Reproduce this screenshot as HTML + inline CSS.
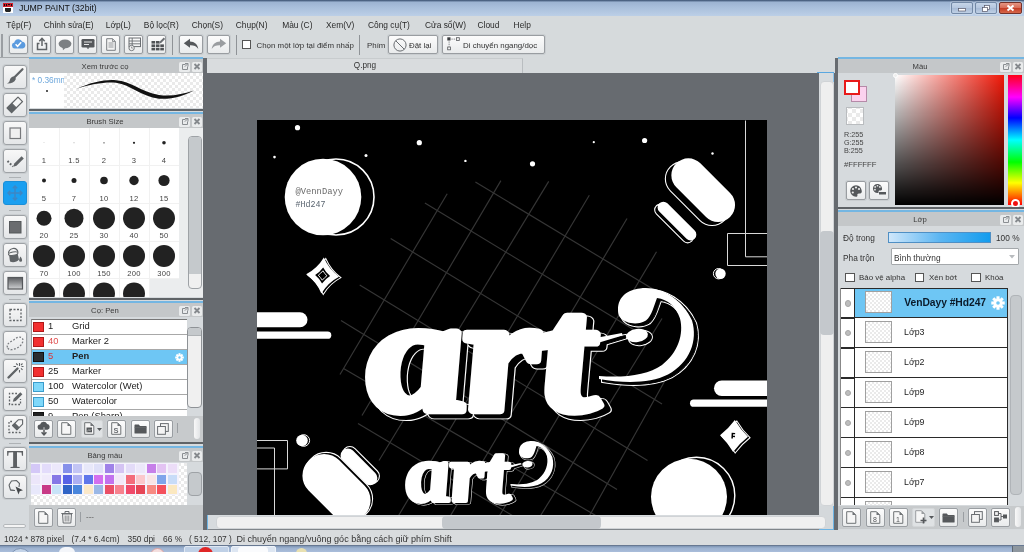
<!DOCTYPE html>
<html><head><meta charset="utf-8"><title>JUMP PAINT</title>
<style>
*{box-sizing:border-box;margin:0;padding:0}
html,body{width:1024px;height:552px;overflow:hidden;background:#d8dbde;font-family:"Liberation Sans","DejaVu Sans",sans-serif;font-size:8.4px;color:#333}
.a{position:absolute}
.t{position:absolute;white-space:pre;line-height:12px}
svg{position:absolute;overflow:visible}
#title{left:0;top:0;width:1024px;height:16px;background:linear-gradient(#3f5573 0,#5b7292 1px,#9cb3d1 2px,#a9bfdb 45%,#bccfe7)}
#menu{left:0;top:16px;width:1024px;height:17px;background:#d6dadc}
#menu span{position:absolute;top:3px;line-height:12px;font-size:8.4px;color:#2a2a2a;white-space:nowrap}
#tbar{left:0;top:33px;width:1024px;height:25px;background:#d6dadc}
.btn{position:absolute;background:linear-gradient(#fcfcfc,#e9ebec);border:1px solid #999da1;border-radius:2px;box-shadow:0 0 0 1px #c9cdd0}
.tool{position:absolute;left:3px;width:24px;height:24px;background:linear-gradient(#f8f8f8,#e4e6e8);border:1px solid #9ea2a6;border-radius:3px;box-shadow:0 0 0 1px #c9cdd0}
.hdr{position:absolute;height:16px;background:#c4c7c9;border-top:2px solid #74b6e2;font-size:7.7px;text-align:center;line-height:15.5px;color:#3a3a3a;padding-right:22px}
.pbody{position:absolute;background:#d6dadd}
.chk{background-color:#fff;background-image:linear-gradient(45deg,#eaeaea 25%,transparent 25%,transparent 75%,#eaeaea 75%),linear-gradient(45deg,#eaeaea 25%,transparent 25%,transparent 75%,#eaeaea 75%);background-size:6px 6px;background-position:0 0,3px 3px}
.hic{position:absolute;top:2.5px;width:10.5px;height:10px;background:#e9ebec;border-radius:1.5px}
.sep{position:absolute;width:1px;background:#8f9397}
.cb{position:absolute;width:9px;height:9px;background:#fff;border:1px solid #555}
.sb{position:absolute;border-radius:4px}
#root{position:absolute;left:0;top:0;width:1024px;height:552px;will-change:transform}
</style></head><body><div id="root">

<div id="title" class="a">
<svg style="left:3px;top:3px" width="10" height="10" viewBox="0 0 10 10"><rect width="10" height="10" fill="#fff"/><rect width="10" height="4" fill="#d21f2b"/><path d="M1 1h1v2h-1zM3 1h1v2h-1zM5 1h2v1h-2zM8 1h1v2h-1z" fill="#111"/><path d="M2 5h6v3l-1 1h-4l-1-1z" fill="#222"/></svg>
<div class="t" style="left:19px;top:2px;font-size:8.7px;color:#111">JUMP PAINT (32bit)</div>
<div class="a" style="left:951px;top:2px;width:22px;height:12px;border:1px solid #7389a6;border-radius:2px;background:linear-gradient(#c6d5e8,#b4c6de 50%,#a6bad5 51%,#bfd0e5);box-shadow:0 0 0 1px rgba(255,255,255,.25)"></div>
<div class="a" style="left:975px;top:2px;width:22px;height:12px;border:1px solid #7389a6;border-radius:2px;background:linear-gradient(#c6d5e8,#b4c6de 50%,#a6bad5 51%,#bfd0e5);box-shadow:0 0 0 1px rgba(255,255,255,.25)"></div>
<div class="a" style="left:999px;top:2px;width:23px;height:12px;border:1px solid #74322a;border-radius:2px;background:linear-gradient(#e59583,#d76a55 50%,#c43b24 51%,#d6674a);box-shadow:0 0 0 1px rgba(255,255,255,.25)"></div>
<svg style="left:951px;top:2px" width="71" height="12" viewBox="0 0 71 12"><rect x="7.5" y="6.5" width="7" height="2.5" fill="#fff" stroke="#556" stroke-width=".7"/><rect x="33.5" y="3.5" width="5" height="4" fill="#fff" stroke="#556" stroke-width=".7"/><rect x="31.5" y="5.5" width="5" height="4" fill="#fff" stroke="#556" stroke-width=".7"/><path d="M56.5 3.5l6 5M62.5 3.5l-6 5" stroke="#fff" stroke-width="2"/></svg>
</div>
<div id="menu" class="a">
<span style="left:6.2px">Tệp(F)</span>
<span style="left:43.8px">Chỉnh sửa(E)</span>
<span style="left:105.8px">Lớp(L)</span>
<span style="left:143.8px">Bộ lọc(R)</span>
<span style="left:191.8px">Chọn(S)</span>
<span style="left:235.8px">Chụp(N)</span>
<span style="left:282.2px">Màu (C)</span>
<span style="left:326px">Xem(V)</span>
<span style="left:368px">Công cụ(T)</span>
<span style="left:425px">Cửa sổ(W)</span>
<span style="left:477.5px">Cloud</span>
<span style="left:513.6px">Help</span>
</div>
<div id="tbar" class="a">
<div class="sep" style="left:1px;top:1px;height:23px;width:2px;background:#9a9ea2"></div>
<div class="a" style="left:0;top:24px;width:29px;height:1px;background:#a4a8ab"></div>
<div class="btn" id="tb0" style="left:8.8px;top:2px;width:19px;height:19px"></div>
<div class="btn" id="tb1" style="left:31.9px;top:2px;width:19px;height:19px"></div>
<div class="btn" id="tb2" style="left:55px;top:2px;width:19px;height:19px"></div>
<div class="btn" id="tb3" style="left:78.1px;top:2px;width:19px;height:19px"></div>
<div class="btn" id="tb4" style="left:101.2px;top:2px;width:19px;height:19px"></div>
<div class="btn" id="tb5" style="left:124.3px;top:2px;width:19px;height:19px"></div>
<div class="btn" id="tb6" style="left:147.4px;top:2px;width:19px;height:19px"></div>
<div class="sep" style="left:171.5px;top:2px;height:20px"></div>
<div class="btn" id="undo" style="left:179px;top:2px;width:23.5px;height:19px"></div>
<div class="btn" id="redo" style="left:206.5px;top:2px;width:23.5px;height:19px"></div>
<div class="sep" style="left:235.5px;top:2px;height:20px"></div>
<div class="cb" style="left:242px;top:7px"></div>
<div class="t" style="left:256.5px;top:7px;font-size:7.9px">Chọn một lớp tại điểm nhấp</div>
<div class="sep" style="left:358.5px;top:2px;height:20px"></div>
<div class="t" style="left:367px;top:7px;font-size:7.9px">Phím</div>
<div class="btn" style="left:388px;top:2px;width:50px;height:19px"></div>
<div class="t" style="left:409px;top:7px;font-size:7.9px">Đặt lại</div>
<div class="btn" style="left:442px;top:2px;width:103px;height:19px"></div>
<div class="t" style="left:463px;top:7px;font-size:7.9px">Di chuyển ngang/dọc</div>
</div>
<div class="a" id="cv" style="left:203px;top:58px;width:635px;height:472px;background:#676b70;overflow:hidden">
<div class="a" style="left:4px;top:0;width:628px;height:15px;background:#d6dadc"></div>
<div class="a" style="left:4px;top:0;width:316px;height:15px;background:#d9dcde;border-right:1px solid #b9bdc0;border-top:1px solid #c8ccce"></div>
<div class="t" style="left:147px;top:2px;font-size:8.2px;width:30px;text-align:center">Q.png</div>
<svg style="left:54px;top:61.500px;overflow:hidden" width="510" height="395.500" viewBox="257 119.500 510 395.500">
<rect x="257" y="119" width="510" height="397" fill="#000"/>
<g stroke="#363636" stroke-width="1.15" fill="none">
<path d="M475.4 181.6L652 288"/>
<path d="M424.9 202.5L640 333"/>
<path d="M390.7 238.1L662 403.5"/>
<path d="M359.7 284.5L647.5 460"/>
<path d="M341 320L617 489"/>
<path d="M343.5 368L598.3 516.5"/>
<path d="M358 423L514 516"/>
<path d="M447.2 193.2L340 374"/>
<path d="M500.9 180.1L362 415"/>
<path d="M548.7 180.9L379 460"/>
<path d="M589.3 194.8L398 516"/>
<path d="M627 218L450 516"/>
<path d="M656.5 251.3L499 516"/>
<path d="M662 318L540 516"/>
<path d="M664.9 380.3L589 516"/>
</g>
<circle cx="297.5" cy="127.2" r="2.6" fill="#fff"/>
<circle cx="419.3" cy="142.2" r="2.6" fill="#fff"/>
<circle cx="274.5" cy="156.6" r="1.3" fill="#fff"/>
<circle cx="366" cy="155" r="1.5" fill="#fff"/>
<circle cx="465.4" cy="160.4" r="1.2" fill="#fff"/>
<circle cx="532.5" cy="163.3" r="2.6" fill="#fff"/>
<circle cx="593.8" cy="141.7" r="1.1" fill="#fff"/>
<circle cx="644.6" cy="140" r="2.6" fill="#fff"/>
<circle cx="712.5" cy="153" r="1.2" fill="#fff"/>
<circle cx="336" cy="196.500" r="38" fill="#000" stroke="#fff" stroke-width="1.600"/>
<circle cx="323" cy="196.500" r="38.300" fill="#fff"/>
<text x="295.500" y="193" font-family="Liberation Mono,monospace" font-size="8.600" fill="#6a6a6a" textLength="47.500" lengthAdjust="spacingAndGlyphs">@VennDayy</text>
<text x="295.500" y="206.500" font-family="Liberation Mono,monospace" font-size="8.600" fill="#5a6570" textLength="30" lengthAdjust="spacingAndGlyphs">#Hd247</text>
<g transform="translate(324.500 276) rotate(4)"><path d="M0 -18Q5.94 -6.48 16.5 0Q5.94 6.48 0 18Q-5.94 6.48 -16.5 0Q-5.94 -6.48 0 -18Z" fill="#000" stroke="#fff" stroke-width="1"/></g>
<g transform="translate(322.600 275) rotate(4)"><path d="M0 -18Q5.94 -6.48 16.5 0Q5.94 6.48 0 18Q-5.94 6.48 -16.5 0Q-5.94 -6.48 0 -18Z" fill="#fff"/><path d="M0 -8Q3.00 -3.20 7.5 0Q3.00 3.20 0 8Q-3.00 3.20 -7.5 0Q-3.00 -3.20 0 -8Z" fill="#000"/><path d="M0 -4.7Q1.94 -2.12 4.3 0Q1.94 2.12 0 4.7Q-1.94 2.12 -4.3 0Q-1.94 -2.12 0 -4.7Z" fill="none" stroke="#fff" stroke-width=".9"/></g>
<rect x="240" y="311.700" width="67.500" height="15" rx="7.500" fill="#fff"/>
<rect x="240" y="331" width="91.300" height="7.300" rx="3.650" fill="#fff"/>
<rect x="714" y="380" width="80" height="15.500" rx="7.700" fill="#fff"/>
<rect x="690" y="399" width="100" height="7.300" rx="3.650" fill="#fff"/>
<path d="M745.500 120V256.300H767M767 233H727.500V265H767" fill="none" stroke="#d8d8d8" stroke-width="1"/>
<path d="M257 440H287.500V468.400H257M257 447.500H274.500V516" fill="none" stroke="#d8d8d8" stroke-width="1"/>
<rect x="659.2" y="176.2" width="76" height="34" rx="17" transform="rotate(45 697.2 193.2)" fill="#000" stroke="#fff" stroke-width="1.1"/>
<rect x="665.2" y="172.7" width="76" height="34" rx="17" transform="rotate(45 703.2 189.7)" fill="#fff"/>
<rect x="649.0" y="217.2" width="50" height="11.5" rx="5.7" transform="rotate(45 674 223)" fill="#000" stroke="#fff" stroke-width="1.1"/>
<rect x="652.0" y="214.8" width="50" height="11.5" rx="5.7" transform="rotate(45 677 220.5)" fill="#fff"/>
<circle cx="718.600" cy="273.200" r="5.200" fill="#000" stroke="#fff" stroke-width="1"/><circle cx="720.500" cy="273.200" r="5.200" fill="#fff"/>
<circle cx="303.800" cy="440" r="5.800" fill="#000" stroke="#fff" stroke-width="1"/><circle cx="302" cy="440" r="5.800" fill="#fff"/>
<rect x="338.0" y="457.2" width="46" height="14.5" rx="7.2" transform="rotate(45 361 464.5)" fill="#000" stroke="#fff" stroke-width="1.1"/>
<rect x="336.0" y="459.1" width="46" height="14.5" rx="7.2" transform="rotate(45 359 466.3)" fill="#fff"/>
<rect x="299.5" y="464.5" width="78" height="43" rx="21" transform="rotate(45 338.5 486)" fill="#000" stroke="#fff" stroke-width="1.1"/>
<rect x="297.5" y="466.0" width="78" height="43" rx="21" transform="rotate(45 336.5 487.5)" fill="#fff"/>
<g transform="translate(736 436.500) rotate(3)"><path d="M0 -16Q6.02 -6.88 14 0Q6.02 6.88 0 16Q-6.02 6.88 -14 0Q-6.02 -6.88 0 -16Z" fill="#000" stroke="#fff" stroke-width="1"/></g>
<g transform="translate(734 435.500) rotate(3)"><path d="M0 -16Q6.02 -6.88 14 0Q6.02 6.88 0 16Q-6.02 6.88 -14 0Q-6.02 -6.88 0 -16Z" fill="#fff"/><path d="M-2.500 -3h3.500v1.300h-2v1.500h2v1.300h-2v1.500h-1.500z" fill="#000"/></g>
<circle cx="696.500" cy="495" r="38.300" fill="#000" stroke="#fff" stroke-width="1.400"/>
<circle cx="689" cy="496.300" r="38" fill="#fff"/>
<g transform="translate(0 0)"><g transform="translate(6 3.500)"><g transform="translate(371.500 409.500) scale(1.12 .93) skewX(6)"><text x="0 87 155" y="0" font-family="Liberation Serif,serif" font-style="italic" font-weight="bold" font-size="178" stroke-linejoin="round" fill="#000" stroke="#fff" stroke-width="11.500">art</text></g></g><g transform="translate(3.500 2.500)" fill="#000" stroke="#fff" stroke-width="3"><path d="M618 309C618 296 628 289 640 288C660 285 682 298 692 320C698 340 690 362 668 374C650 383 625 383 599 378.500L599 375.500C625 377.500 648 374.500 662 364.500C678 352 684 334 680 318C676 306 668 299 657 297.500C654 305 652 315 646 320C638 325 626 323 621 318C618 315 618 312 618 309Z"/><path d="M528 346L590 338.500L622 332.500L622.500 335L591 344.500L528 352Z"/><ellipse cx="637" cy="335" rx="11" ry="6.500" transform="rotate(-8 637 335)"/></g><g transform="translate(6 3.500)"><g transform="translate(371.500 409.500) scale(1.12 .93) skewX(6)"><text x="0 87 155" y="0" font-family="Liberation Serif,serif" font-style="italic" font-weight="bold" font-size="178" stroke-linejoin="round" fill="#000" stroke="#000" stroke-width="9.500">art</text></g></g><g transform="translate(3.500 2.500)" fill="#000" stroke="#000" stroke-width="1"><path d="M618 309C618 296 628 289 640 288C660 285 682 298 692 320C698 340 690 362 668 374C650 383 625 383 599 378.500L599 375.500C625 377.500 648 374.500 662 364.500C678 352 684 334 680 318C676 306 668 299 657 297.500C654 305 652 315 646 320C638 325 626 323 621 318C618 315 618 312 618 309Z"/><path d="M528 346L590 338.500L622 332.500L622.500 335L591 344.500L528 352Z"/><ellipse cx="637" cy="335" rx="11" ry="6.500" transform="rotate(-8 637 335)"/></g><g transform="translate(371.500 409.500) scale(1.12 .93) skewX(6)"><text x="0 87 155" y="0" font-family="Liberation Serif,serif" font-style="italic" font-weight="bold" font-size="178" stroke-linejoin="round" fill="#fff" stroke="#fff" stroke-width="9">art</text></g><g fill="#fff"><path d="M618 309C618 296 628 289 640 288C660 285 682 298 692 320C698 340 690 362 668 374C650 383 625 383 599 378.500L599 375.500C625 377.500 648 374.500 662 364.500C678 352 684 334 680 318C676 306 668 299 657 297.500C654 305 652 315 646 320C638 325 626 323 621 318C618 315 618 312 618 309Z"/><path d="M528 346L590 338.500L622 332.500L622.500 335L591 344.500L528 352Z"/><ellipse cx="637" cy="335" rx="11" ry="6.500" transform="rotate(-8 637 335)"/></g></g>
<g transform="translate(240.900 299.600) scale(0.45 0.49)"><g transform="translate(6 3.500)"><g transform="translate(371.500 409.500) scale(1.12 .93) skewX(6)"><text x="0 87 155" y="0" font-family="Liberation Serif,serif" font-style="italic" font-weight="bold" font-size="178" stroke-linejoin="round" fill="#000" stroke="#fff" stroke-width="11.500">art</text></g></g><g transform="translate(3.500 2.500)" fill="#000" stroke="#fff" stroke-width="3"><path d="M618 309C618 296 628 289 640 288C660 285 682 298 692 320C698 340 690 362 668 374C650 383 625 383 599 378.500L599 375.500C625 377.500 648 374.500 662 364.500C678 352 684 334 680 318C676 306 668 299 657 297.500C654 305 652 315 646 320C638 325 626 323 621 318C618 315 618 312 618 309Z"/><path d="M528 346L590 338.500L622 332.500L622.500 335L591 344.500L528 352Z"/><ellipse cx="637" cy="335" rx="11" ry="6.500" transform="rotate(-8 637 335)"/></g><g transform="translate(6 3.500)"><g transform="translate(371.500 409.500) scale(1.12 .93) skewX(6)"><text x="0 87 155" y="0" font-family="Liberation Serif,serif" font-style="italic" font-weight="bold" font-size="178" stroke-linejoin="round" fill="#000" stroke="#000" stroke-width="9.500">art</text></g></g><g transform="translate(3.500 2.500)" fill="#000" stroke="#000" stroke-width="1"><path d="M618 309C618 296 628 289 640 288C660 285 682 298 692 320C698 340 690 362 668 374C650 383 625 383 599 378.500L599 375.500C625 377.500 648 374.500 662 364.500C678 352 684 334 680 318C676 306 668 299 657 297.500C654 305 652 315 646 320C638 325 626 323 621 318C618 315 618 312 618 309Z"/><path d="M528 346L590 338.500L622 332.500L622.500 335L591 344.500L528 352Z"/><ellipse cx="637" cy="335" rx="11" ry="6.500" transform="rotate(-8 637 335)"/></g><g transform="translate(371.500 409.500) scale(1.12 .93) skewX(6)"><text x="0 87 155" y="0" font-family="Liberation Serif,serif" font-style="italic" font-weight="bold" font-size="178" stroke-linejoin="round" fill="#fff" stroke="#fff" stroke-width="9">art</text></g><g fill="#fff"><path d="M618 309C618 296 628 289 640 288C660 285 682 298 692 320C698 340 690 362 668 374C650 383 625 383 599 378.500L599 375.500C625 377.500 648 374.500 662 364.500C678 352 684 334 680 318C676 306 668 299 657 297.500C654 305 652 315 646 320C638 325 626 323 621 318C618 315 618 312 618 309Z"/><path d="M528 346L590 338.500L622 332.500L622.500 335L591 344.500L528 352Z"/><ellipse cx="637" cy="335" rx="11" ry="6.500" transform="rotate(-8 637 335)"/></g></g>
</svg>
<div class="a" style="left:616px;top:15px;width:15px;height:457px;background:#d7dbde"></div>
<div class="a" style="left:614px;top:14px;width:17px;height:1px;background:#5aa7e0"></div>
<div class="a" style="left:630px;top:15px;width:1px;height:9px;background:#8fc4ea"></div>
<div class="sb" style="left:617px;top:23px;width:13.500px;height:425px;background:#efefef;border:1px solid #d0d3d6"></div>
<div class="sb" style="left:617px;top:173px;width:13.500px;height:104px;background:#c4c8cc"></div>
<div class="a" style="left:4px;top:457px;width:612px;height:15px;background:#d7dbde;border-bottom:1px solid #80858a;border-left:1px solid #6db4e4"></div>
<div class="a" style="left:616px;top:448px;width:15px;height:24px;background:#d4d8db;border-bottom:1px solid #6db4e4;border-right:1px solid #6db4e4"></div>
<div class="sb" style="left:12.500px;top:458px;width:610px;height:13px;background:#f0f0f0;border:1px solid #d0d3d6"></div>
<div class="sb" style="left:239px;top:458px;width:159px;height:13px;background:#c4c8cc"></div>
</div>
<div class="a" id="status" style="left:0;top:530px;width:1024px;height:16px;background:#d9dcde;color:#333"><div class="t" style="left:4px;top:3px;font-size:8.400px">1024 * 878 pixel</div><div class="t" style="left:71.500px;top:3px;font-size:8.400px">(7.4 * 6.4cm)</div><div class="t" style="left:127.500px;top:3px;font-size:8.400px">350 dpi</div><div class="t" style="left:163px;top:3px;font-size:8.400px">66 %</div><div class="t" style="left:189px;top:3px;font-size:8.400px">( 512, 107 )</div><div class="t" style="left:236.500px;top:3px;font-size:9.050px">Di chuyển ngang/vuông góc bằng cách giữ phím Shift</div></div>
<div class="a" id="task" style="left:0;top:545px;width:1024px;height:7px;background:linear-gradient(#56647a,#8097b6 18%,#9db2d0 45%,#a9bdda);overflow:hidden"><div class="a" style="left:9px;top:2.500px;width:23px;height:23px;border-radius:50%;background:#c3d3e8;border:1px solid #7d93b3"></div><div class="a" style="left:59px;top:2px;width:16px;height:14px;border-radius:6px;background:#f4f6fa"></div><div class="a" style="left:150px;top:2.500px;width:15px;height:15px;border-radius:50%;background:#f3dede;border:1px solid #d8a0a0"></div><div class="a" style="left:184px;top:1px;width:45px;height:10px;border-radius:2px;background:#bfd0e6;border:1px solid #dfe8f3"></div><div class="a" style="left:198px;top:2px;width:15px;height:15px;border-radius:50%;background:#e02626"></div><div class="a" style="left:231px;top:1px;width:45px;height:10px;border-radius:2px;background:#dde6f2;border:1px solid #eef3f9"></div><div class="a" style="left:238px;top:2px;width:30px;height:10px;border-radius:3px;background:#fafbfd"></div><div class="a" style="left:296px;top:3px;width:11px;height:11px;border-radius:50%;background:#e8e0b0"></div><div class="a" style="left:1012px;top:1px;width:12px;height:8px;background:#8e979f;border-left:1px solid #5d6772"></div></div>
<div class="a" id="left" style="left:0;top:58px;width:203px;height:472px;background:#d6dadd">
<div class="tool" id="tool0" style="top:7px"></div>
<div class="tool" id="tool1" style="top:35px"></div>
<div class="tool" id="tool2" style="top:63px"></div>
<div class="tool" id="tool3" style="top:91px"></div>
<div class="tool" id="tool4" style="top:123px;background:#1a9ff0;border-color:#1a8fd8;box-shadow:none"></div>
<div class="tool" id="tool5" style="top:157px"></div>
<div class="tool" id="tool6" style="top:185px"></div>
<div class="tool" id="tool7" style="top:213px"></div>
<div class="tool" id="tool8" style="top:245px"></div>
<div class="tool" id="tool9" style="top:273px"></div>
<div class="tool" id="tool10" style="top:301px"></div>
<div class="tool" id="tool11" style="top:329px"></div>
<div class="tool" id="tool12" style="top:357px"></div>
<div class="tool" id="tool13" style="top:389px"></div>
<div class="tool" id="tool14" style="top:417px"></div>
<div class="a" style="left:9px;top:119px;width:12px;height:1px;background:#aeb2b5"></div>
<div class="a" style="left:9px;top:152px;width:12px;height:1px;background:#aeb2b5"></div>
<div class="a" style="left:9px;top:240.5px;width:12px;height:1px;background:#aeb2b5"></div>
<div class="a" style="left:9px;top:384.5px;width:12px;height:1px;background:#aeb2b5"></div>
<div class="a" style="left:9px;top:469px;width:12px;height:1px;background:#aeb2b5"></div>
<div class="hdr" style="left:29px;top:-1px;width:174px">Xem trước cọ<div class="hic" style="left:150px"></div><div class="hic" style="left:162.5px"></div><svg style="left:151px;top:3px" width="22" height="9" viewBox="0 0 22 9"><path d="M5.5 2.5h-3v5h5v-3" fill="none" stroke="#8a8e92" stroke-width="1"/><path d="M5 1.5h3v3M7.8 1.7l-3 3" fill="none" stroke="#8a8e92" stroke-width="1"/><path d="M14.500 2l5 5M19.500 2l-5 5" stroke="#85898d" stroke-width="1.8"/></svg></div>
<div class="a" style="left:30px;top:15px;width:34px;height:35px;background:#fff;overflow:hidden"><div class="t" style="left:2px;top:1px;font-size:8.3px;color:#6fa8dc">* 0.36mm</div><div class="a" style="left:15.5px;top:17px;width:2px;height:2px;border-radius:1px;background:#222"></div></div>
<div class="a chk" style="left:64px;top:15px;width:139px;height:35px"></div>
<svg style="left:64px;top:15px" width="139" height="35" viewBox="0 0 139 35"><path d="M12.500 15.800C28 9 41 6.300 52 7.200C67 8.500 77 18.500 95 22C107 23.800 119 21 130 17.500C120 22.800 108 26.600 95 25.700C77 23.500 67 12 52 9.800C41 8.800 28 11 12.500 15.800Z" fill="#111"/></svg>
<div class="a" style="left:29px;top:50.5px;width:174px;height:2px;background:#5f6367"></div>
<div class="hdr" style="left:29px;top:54px;width:174px">Brush Size<div class="hic" style="left:150px"></div><div class="hic" style="left:162.5px"></div><svg style="left:151px;top:3px" width="22" height="9" viewBox="0 0 22 9"><path d="M5.5 2.5h-3v5h5v-3" fill="none" stroke="#8a8e92" stroke-width="1"/><path d="M5 1.5h3v3M7.8 1.7l-3 3" fill="none" stroke="#8a8e92" stroke-width="1"/><path d="M14.500 2l5 5M19.500 2l-5 5" stroke="#85898d" stroke-width="1.8"/></svg></div>
<div class="a" style="left:29px;top:70px;width:174px;height:169px;background:#ebedee;overflow:hidden">
<div class="a" style="left:0;top:0;width:150px;height:169px;background:#fff"></div>
<svg style="left:0;top:0" width="150" height="169"><circle cx="15" cy="14.8" r="0.25" fill="#222"/></svg>
<div class="t" style="left:0px;top:27.0px;width:30px;text-align:center;font-size:7.6px;color:#444;letter-spacing:.3px">1</div>
<svg style="left:0;top:0" width="150" height="169"><circle cx="45" cy="14.8" r="0.4" fill="#222"/></svg>
<div class="t" style="left:30px;top:27.0px;width:30px;text-align:center;font-size:7.6px;color:#444;letter-spacing:.3px">1.5</div>
<svg style="left:0;top:0" width="150" height="169"><circle cx="75" cy="14.8" r="0.65" fill="#222"/></svg>
<div class="t" style="left:60px;top:27.0px;width:30px;text-align:center;font-size:7.6px;color:#444;letter-spacing:.3px">2</div>
<svg style="left:0;top:0" width="150" height="169"><circle cx="105" cy="14.8" r="1.1" fill="#222"/></svg>
<div class="t" style="left:90px;top:27.0px;width:30px;text-align:center;font-size:7.6px;color:#444;letter-spacing:.3px">3</div>
<svg style="left:0;top:0" width="150" height="169"><circle cx="135" cy="14.8" r="1.8" fill="#222"/></svg>
<div class="t" style="left:120px;top:27.0px;width:30px;text-align:center;font-size:7.6px;color:#444;letter-spacing:.3px">4</div>
<svg style="left:0;top:0" width="150" height="169"><circle cx="15" cy="52.5" r="2.0" fill="#222"/></svg>
<div class="t" style="left:0px;top:64.7px;width:30px;text-align:center;font-size:7.6px;color:#444;letter-spacing:.3px">5</div>
<svg style="left:0;top:0" width="150" height="169"><circle cx="45" cy="52.5" r="2.5" fill="#222"/></svg>
<div class="t" style="left:30px;top:64.7px;width:30px;text-align:center;font-size:7.6px;color:#444;letter-spacing:.3px">7</div>
<svg style="left:0;top:0" width="150" height="169"><circle cx="75" cy="52.5" r="3.8" fill="#222"/></svg>
<div class="t" style="left:60px;top:64.7px;width:30px;text-align:center;font-size:7.6px;color:#444;letter-spacing:.3px">10</div>
<svg style="left:0;top:0" width="150" height="169"><circle cx="105" cy="52.5" r="4.7" fill="#222"/></svg>
<div class="t" style="left:90px;top:64.7px;width:30px;text-align:center;font-size:7.6px;color:#444;letter-spacing:.3px">12</div>
<svg style="left:0;top:0" width="150" height="169"><circle cx="135" cy="52.5" r="5.6" fill="#222"/></svg>
<div class="t" style="left:120px;top:64.7px;width:30px;text-align:center;font-size:7.6px;color:#444;letter-spacing:.3px">15</div>
<svg style="left:0;top:0" width="150" height="169"><circle cx="15" cy="90.2" r="7.5" fill="#222"/></svg>
<div class="t" style="left:0px;top:102.4px;width:30px;text-align:center;font-size:7.6px;color:#444;letter-spacing:.3px">20</div>
<svg style="left:0;top:0" width="150" height="169"><circle cx="45" cy="90.2" r="9.5" fill="#222"/></svg>
<div class="t" style="left:30px;top:102.4px;width:30px;text-align:center;font-size:7.6px;color:#444;letter-spacing:.3px">25</div>
<svg style="left:0;top:0" width="150" height="169"><circle cx="75" cy="90.2" r="11.0" fill="#222"/></svg>
<div class="t" style="left:60px;top:102.4px;width:30px;text-align:center;font-size:7.6px;color:#444;letter-spacing:.3px">30</div>
<svg style="left:0;top:0" width="150" height="169"><circle cx="105" cy="90.2" r="11.0" fill="#222"/></svg>
<div class="t" style="left:90px;top:102.4px;width:30px;text-align:center;font-size:7.6px;color:#444;letter-spacing:.3px">40</div>
<svg style="left:0;top:0" width="150" height="169"><circle cx="135" cy="90.2" r="11.0" fill="#222"/></svg>
<div class="t" style="left:120px;top:102.4px;width:30px;text-align:center;font-size:7.6px;color:#444;letter-spacing:.3px">50</div>
<svg style="left:0;top:0" width="150" height="169"><circle cx="15" cy="127.9" r="11.0" fill="#222"/></svg>
<div class="t" style="left:0px;top:140.1px;width:30px;text-align:center;font-size:7.6px;color:#444;letter-spacing:.3px">70</div>
<svg style="left:0;top:0" width="150" height="169"><circle cx="45" cy="127.9" r="11.0" fill="#222"/></svg>
<div class="t" style="left:30px;top:140.1px;width:30px;text-align:center;font-size:7.6px;color:#444;letter-spacing:.3px">100</div>
<svg style="left:0;top:0" width="150" height="169"><circle cx="75" cy="127.9" r="11.0" fill="#222"/></svg>
<div class="t" style="left:60px;top:140.1px;width:30px;text-align:center;font-size:7.6px;color:#444;letter-spacing:.3px">150</div>
<svg style="left:0;top:0" width="150" height="169"><circle cx="105" cy="127.9" r="11.0" fill="#222"/></svg>
<div class="t" style="left:90px;top:140.1px;width:30px;text-align:center;font-size:7.6px;color:#444;letter-spacing:.3px">200</div>
<svg style="left:0;top:0" width="150" height="169"><circle cx="135" cy="127.9" r="11.0" fill="#222"/></svg>
<div class="t" style="left:120px;top:140.1px;width:30px;text-align:center;font-size:7.6px;color:#444;letter-spacing:.3px">300</div>
<svg style="left:0;top:0" width="150" height="169"><circle cx="15" cy="165.6" r="11.0" fill="#222"/></svg>
<div class="t" style="left:0px;top:177.8px;width:30px;text-align:center;font-size:7.6px;color:#444;letter-spacing:.3px"></div>
<svg style="left:0;top:0" width="150" height="169"><circle cx="45" cy="165.6" r="11.0" fill="#222"/></svg>
<div class="t" style="left:30px;top:177.8px;width:30px;text-align:center;font-size:7.6px;color:#444;letter-spacing:.3px"></div>
<svg style="left:0;top:0" width="150" height="169"><circle cx="75" cy="165.6" r="11.0" fill="#222"/></svg>
<div class="t" style="left:60px;top:177.8px;width:30px;text-align:center;font-size:7.6px;color:#444;letter-spacing:.3px"></div>
<svg style="left:0;top:0" width="150" height="169"><circle cx="105" cy="165.6" r="11.0" fill="#222"/></svg>
<div class="t" style="left:90px;top:177.8px;width:30px;text-align:center;font-size:7.6px;color:#444;letter-spacing:.3px"></div>
<div class="a" style="left:120px;top:150.3px;width:30px;height:38px;background:#ebedee"></div>
<div class="a" style="left:30px;top:0;width:1px;height:169px;background:#f1f1f1"></div>
<div class="a" style="left:60px;top:0;width:1px;height:169px;background:#f1f1f1"></div>
<div class="a" style="left:90px;top:0;width:1px;height:169px;background:#f1f1f1"></div>
<div class="a" style="left:120px;top:0;width:1px;height:169px;background:#f1f1f1"></div>
<div class="a" style="left:0;top:37.2px;width:150px;height:1px;background:#f1f1f1"></div>
<div class="a" style="left:0;top:74.9px;width:150px;height:1px;background:#f1f1f1"></div>
<div class="a" style="left:0;top:112.6px;width:150px;height:1px;background:#f1f1f1"></div>
<div class="a" style="left:0;top:150.3px;width:150px;height:1px;background:#f1f1f1"></div>
<div class="sb" style="left:159px;top:8px;width:13.5px;height:153px;background:#f0f0f0;border:1px solid #9ea2a6;overflow:hidden"><div class="a" style="left:0;top:0;width:12px;height:137px;background:#c5c9cc"></div></div>
</div>
<div class="a" style="left:29px;top:239.5px;width:174px;height:2px;background:#5f6367"></div>
<div class="hdr" style="left:29px;top:243px;width:174px">Cọ: Pen<div class="hic" style="left:150px"></div><div class="hic" style="left:162.5px"></div><svg style="left:151px;top:3px" width="22" height="9" viewBox="0 0 22 9"><path d="M5.5 2.5h-3v5h5v-3" fill="none" stroke="#8a8e92" stroke-width="1"/><path d="M5 1.5h3v3M7.8 1.7l-3 3" fill="none" stroke="#8a8e92" stroke-width="1"/><path d="M14.500 2l5 5M19.500 2l-5 5" stroke="#85898d" stroke-width="1.8"/></svg></div>
<div class="a" style="left:31px;top:261px;width:156px;height:97px;background:#fff;border-top:1px solid #777;border-left:1px solid #999;overflow:hidden">
<div class="a" style="left:0;top:0px;width:156px;height:15px;background:#fff;border-bottom:1px solid #a8a8a8"><div class="a" style="left:1.3px;top:1.5px;width:11px;height:10.5px;background:#f23030;border:1px solid #b01818"></div><div class="t" style="left:16px;top:.3px;font-size:9.4px;color:#222">1</div><div class="t" style="left:40px;top:.3px;font-size:9.4px;color:#222;font-weight:normal">Grid</div></div>
<div class="a" style="left:0;top:15px;width:156px;height:15px;background:#fff;border-bottom:1px solid #a8a8a8"><div class="a" style="left:1.3px;top:1.5px;width:11px;height:10.5px;background:#f23030;border:1px solid #b01818"></div><div class="t" style="left:16px;top:.3px;font-size:9.4px;color:#e05050">40</div><div class="t" style="left:40px;top:.3px;font-size:9.4px;color:#222;font-weight:normal">Marker 2</div></div>
<div class="a" style="left:0;top:30px;width:156px;height:15px;background:#6ec6f4;border-bottom:1px solid #a8a8a8"><div class="a" style="left:1.3px;top:1.5px;width:11px;height:10.5px;background:#2a2d30;border:1px solid #111"></div><div class="t" style="left:16px;top:.3px;font-size:9.4px;color:#e03030">5</div><div class="t" style="left:40px;top:.3px;font-size:9.4px;color:#222;font-weight:bold">Pen</div></div>
<div class="a" style="left:0;top:45px;width:156px;height:15px;background:#fff;border-bottom:1px solid #a8a8a8"><div class="a" style="left:1.3px;top:1.5px;width:11px;height:10.5px;background:#f23030;border:1px solid #b01818"></div><div class="t" style="left:16px;top:.3px;font-size:9.4px;color:#222">25</div><div class="t" style="left:40px;top:.3px;font-size:9.4px;color:#222;font-weight:normal">Marker</div></div>
<div class="a" style="left:0;top:60px;width:156px;height:15px;background:#fff;border-bottom:1px solid #a8a8a8"><div class="a" style="left:1.3px;top:1.5px;width:11px;height:10.5px;background:#7fd8fa;border:1px solid #3a9ccc"></div><div class="t" style="left:16px;top:.3px;font-size:9.4px;color:#222">100</div><div class="t" style="left:40px;top:.3px;font-size:9.4px;color:#222;font-weight:normal">Watercolor (Wet)</div></div>
<div class="a" style="left:0;top:75px;width:156px;height:15px;background:#fff;border-bottom:1px solid #a8a8a8"><div class="a" style="left:1.3px;top:1.5px;width:11px;height:10.5px;background:#7fd8fa;border:1px solid #3a9ccc"></div><div class="t" style="left:16px;top:.3px;font-size:9.4px;color:#222">50</div><div class="t" style="left:40px;top:.3px;font-size:9.4px;color:#222;font-weight:normal">Watercolor</div></div>
<div class="a" style="left:0;top:90px;width:156px;height:15px;background:#fff;border-bottom:1px solid #a8a8a8"><div class="a" style="left:1.3px;top:1.5px;width:11px;height:10.5px;background:#222;border:1px solid #111"></div><div class="t" style="left:16px;top:.3px;font-size:9.4px;color:#222">9</div><div class="t" style="left:40px;top:.3px;font-size:9.4px;color:#222;font-weight:normal">Pen (Sharp)</div></div>
<svg style="left:143px;top:33px" width="9" height="9" viewBox="-5 -5 10 10"><g fill="#fff"><circle r="3.2"/><rect x="-1.1" y="-4.8" width="2.2" height="3" transform="rotate(0)"/><rect x="-1.1" y="-4.8" width="2.2" height="3" transform="rotate(45)"/><rect x="-1.1" y="-4.8" width="2.2" height="3" transform="rotate(90)"/><rect x="-1.1" y="-4.8" width="2.2" height="3" transform="rotate(135)"/><rect x="-1.1" y="-4.8" width="2.2" height="3" transform="rotate(180)"/><rect x="-1.1" y="-4.8" width="2.2" height="3" transform="rotate(225)"/><rect x="-1.1" y="-4.8" width="2.2" height="3" transform="rotate(270)"/><rect x="-1.1" y="-4.8" width="2.2" height="3" transform="rotate(315)"/></g><circle r="1.3" fill="#6ec6f4"/></svg>
</div>
<div class="sb" style="left:187px;top:268.6px;width:15px;height:81px;background:#f0f0f0;border:1px solid #8e9296;overflow:hidden"><div class="a" style="left:0;top:0;width:13px;height:8.5px;background:#c5c9cc;border-bottom:1px solid #aeb2b5"></div></div>
<div class="a" style="left:29px;top:358px;width:174px;height:25.500px;background:#c7cacc"></div>
<div class="btn" id="bb0" style="left:33.5px;top:361.5px;width:19px;height:18.5px"></div>
<div class="btn" id="bb1" style="left:57px;top:361.5px;width:19px;height:18.5px"></div>
<div class="btn" id="bb2" style="left:80.5px;top:361.5px;width:22px;height:18.5px;border-color:#d3d6d8;box-shadow:none;background:#dfe2e4"></div>
<div class="btn" id="bb3" style="left:107px;top:361.5px;width:19px;height:18.5px"></div>
<div class="btn" id="bb4" style="left:130.5px;top:361.5px;width:19px;height:18.5px"></div>
<div class="btn" id="bb5" style="left:153.5px;top:361.5px;width:19px;height:18.5px"></div>
<div class="sep" style="left:177px;top:365px;height:10px;background:#9a9ea2"></div>
<div class="sb" style="left:194px;top:360px;width:6px;height:21px;background:linear-gradient(90deg,#f8f8f8,#e2e4e6);border-radius:3px"></div>
<div class="a" style="left:29px;top:384px;width:174px;height:2px;background:#5f6367"></div>
<div class="hdr" style="left:29px;top:388px;width:174px">Bảng màu<div class="hic" style="left:150px"></div><div class="hic" style="left:162.5px"></div><svg style="left:151px;top:3px" width="22" height="9" viewBox="0 0 22 9"><path d="M5.5 2.5h-3v5h5v-3" fill="none" stroke="#8a8e92" stroke-width="1"/><path d="M5 1.5h3v3M7.8 1.7l-3 3" fill="none" stroke="#8a8e92" stroke-width="1"/><path d="M14.500 2l5 5M19.500 2l-5 5" stroke="#85898d" stroke-width="1.8"/></svg></div>
<div class="a chk" style="left:31px;top:405px;width:156px;height:42px"></div>
<div class="a" style="left:31px;top:405px;width:147.5px;height:32px;background:#f4f2fc"></div>
<div class="a" style="left:31.4px;top:406.0px;width:9px;height:9px;background:#d4c8f7"></div>
<div class="a" style="left:41.9px;top:406.0px;width:9px;height:9px;background:#e3dcfb"></div>
<div class="a" style="left:52.4px;top:406.0px;width:9px;height:9px;background:#ece8fb"></div>
<div class="a" style="left:62.9px;top:406.0px;width:9px;height:9px;background:#8690ea"></div>
<div class="a" style="left:73.4px;top:406.0px;width:9px;height:9px;background:#c3c5f5"></div>
<div class="a" style="left:83.9px;top:406.0px;width:9px;height:9px;background:#e8e8fa"></div>
<div class="a" style="left:94.4px;top:406.0px;width:9px;height:9px;background:#dfe0f8"></div>
<div class="a" style="left:104.9px;top:406.0px;width:9px;height:9px;background:#9f82e8"></div>
<div class="a" style="left:115.4px;top:406.0px;width:9px;height:9px;background:#d4c3f3"></div>
<div class="a" style="left:125.9px;top:406.0px;width:9px;height:9px;background:#e3dbf8"></div>
<div class="a" style="left:136.4px;top:406.0px;width:9px;height:9px;background:#ece8fa"></div>
<div class="a" style="left:146.9px;top:406.0px;width:9px;height:9px;background:#c67fe9"></div>
<div class="a" style="left:157.4px;top:406.0px;width:9px;height:9px;background:#e3c3f3"></div>
<div class="a" style="left:167.9px;top:406.0px;width:9px;height:9px;background:#ecddf8"></div>
<div class="a" style="left:31.4px;top:416.6px;width:9px;height:9px;background:#ece6fa"></div>
<div class="a" style="left:41.9px;top:416.6px;width:9px;height:9px;background:#f0ebfb"></div>
<div class="a" style="left:52.4px;top:416.6px;width:9px;height:9px;background:#8677e6"></div>
<div class="a" style="left:62.9px;top:416.6px;width:9px;height:9px;background:#5863e6"></div>
<div class="a" style="left:73.4px;top:416.6px;width:9px;height:9px;background:#acaff2"></div>
<div class="a" style="left:83.9px;top:416.6px;width:9px;height:9px;background:#5f76ea"></div>
<div class="a" style="left:94.4px;top:416.6px;width:9px;height:9px;background:#d46fee"></div>
<div class="a" style="left:104.9px;top:416.6px;width:9px;height:9px;background:#c272ee"></div>
<div class="a" style="left:115.4px;top:416.6px;width:9px;height:9px;background:#f2e8f8"></div>
<div class="a" style="left:125.9px;top:416.6px;width:9px;height:9px;background:#f36c7b"></div>
<div class="a" style="left:136.4px;top:416.6px;width:9px;height:9px;background:#fbc8cc"></div>
<div class="a" style="left:146.9px;top:416.6px;width:9px;height:9px;background:#f9e4e6"></div>
<div class="a" style="left:157.4px;top:416.6px;width:9px;height:9px;background:#7fa4ea"></div>
<div class="a" style="left:167.9px;top:416.6px;width:9px;height:9px;background:#c8dcf8"></div>
<div class="a" style="left:31.4px;top:427.2px;width:9px;height:9px;background:#e8e8fb"></div>
<div class="a" style="left:41.9px;top:427.2px;width:9px;height:9px;background:#c83a86"></div>
<div class="a" style="left:52.4px;top:427.2px;width:9px;height:9px;background:#c8e3f8"></div>
<div class="a" style="left:62.9px;top:427.2px;width:9px;height:9px;background:#3064c6"></div>
<div class="a" style="left:73.4px;top:427.2px;width:9px;height:9px;background:#4a86dc"></div>
<div class="a" style="left:83.9px;top:427.2px;width:9px;height:9px;background:#fbe8c8"></div>
<div class="a" style="left:94.4px;top:427.2px;width:9px;height:9px;background:#9bb8e6"></div>
<div class="a" style="left:104.9px;top:427.2px;width:9px;height:9px;background:#ea4f66"></div>
<div class="a" style="left:115.4px;top:427.2px;width:9px;height:9px;background:#f7828e"></div>
<div class="a" style="left:125.9px;top:427.2px;width:9px;height:9px;background:#f04a6a"></div>
<div class="a" style="left:136.4px;top:427.2px;width:9px;height:9px;background:#e64656"></div>
<div class="a" style="left:146.9px;top:427.2px;width:9px;height:9px;background:#f78a82"></div>
<div class="a" style="left:157.4px;top:427.2px;width:9px;height:9px;background:#f4505c"></div>
<div class="a" style="left:167.9px;top:427.2px;width:9px;height:9px;background:#fbe8c0"></div>
<div class="sb" style="left:187.5px;top:414px;width:14px;height:24px;background:#c5c9cc;border:1px solid #9ea2a6"></div>
<div class="a" style="left:29px;top:447px;width:174px;height:24.500px;background:#c7cacc"></div>
<div class="btn" id="pb0" style="left:33.5px;top:450px;width:19px;height:18.5px"></div>
<div class="btn" id="pb1" style="left:57px;top:450px;width:19px;height:18.5px"></div>
<div class="sep" style="left:80px;top:454px;height:10px;background:#9a9ea2"></div>
<div class="t" style="left:86px;top:453px;font-size:8px;color:#555">---</div>
</div>
<div class="a" id="right" style="left:838px;top:58px;width:186px;height:472px;background:#d6dadd">
<div class="hdr" style="left:0;top:-1px;width:186px">Màu<div class="hic" style="left:162px"></div><div class="hic" style="left:174.5px"></div><svg style="left:163px;top:3px" width="22" height="9" viewBox="0 0 22 9"><path d="M5.500 2.500h-3v5h5v-3" fill="none" stroke="#8a8e92" stroke-width="1"/><path d="M5 1.500h3v3M7.800 1.700l-3 3" fill="none" stroke="#8a8e92" stroke-width="1"/><path d="M14.500 2l5 5M19.500 2l-5 5" stroke="#85898d" stroke-width="1.800"/></svg></div>
<div class="a" style="left:13px;top:28px;width:16px;height:16px;background:#fbd2ee;border:1px solid #b58aa8"></div>
<div class="a" style="left:6px;top:21.500px;width:15.500px;height:15.500px;background:#fff;border:2px solid #e81a1a"></div>
<div class="a chk" style="left:8px;top:49px;width:18px;height:18px;border:1px solid #b9bcbf;background-size:8px 8px;background-position:1px 1px,5px 5px"></div>
<div class="t" style="left:6px;top:70.5px;font-size:7.200px;color:#444">R:255</div>
<div class="t" style="left:6px;top:78.9px;font-size:7.200px;color:#444">G:255</div>
<div class="t" style="left:6px;top:87.3px;font-size:7.200px;color:#444">B:255</div>
<div class="t" style="left:6px;top:100.500px;font-size:7.700px;color:#444">#FFFFFF</div>
<div class="btn" id="cb0" style="left:8px;top:122.500px;width:19.500px;height:19.500px"></div>
<div class="btn" id="cb1" style="left:31px;top:122.500px;width:19.500px;height:19.500px"></div>
<div class="a" style="left:57px;top:16.500px;width:109px;height:130.500px;background:linear-gradient(to top,#000,rgba(0,0,0,0)),linear-gradient(to right,#fff,#f01808)"></div>
<div class="a" style="left:169.500px;top:16.500px;width:14.500px;height:130.500px;background:linear-gradient(#ff0018,#ff00ff 17%,#0000ff 33%,#00ffff 50%,#00ff00 67%,#ffff00 83%,#ff0000)"></div>
<div class="a" style="left:54.500px;top:14.500px;width:5px;height:5px;border-radius:50%;border:1px solid #fff;background:#eee"></div>
<div class="a" style="left:172.500px;top:140.500px;width:9px;height:9px;border-radius:50%;border:2px solid #fff;background:#f01010"></div>
<div class="a" style="left:0;top:149px;width:186px;height:2px;background:#5f6367"></div>
<div class="hdr" style="left:0;top:152px;width:186px">Lớp<div class="hic" style="left:162px"></div><div class="hic" style="left:174.5px"></div><svg style="left:163px;top:3px" width="22" height="9" viewBox="0 0 22 9"><path d="M5.500 2.500h-3v5h5v-3" fill="none" stroke="#8a8e92" stroke-width="1"/><path d="M5 1.500h3v3M7.800 1.700l-3 3" fill="none" stroke="#8a8e92" stroke-width="1"/><path d="M14.500 2l5 5M19.500 2l-5 5" stroke="#85898d" stroke-width="1.800"/></svg></div>
<div class="t" style="left:5px;top:174px;font-size:8.300px">Độ trong</div>
<div class="a" style="left:50px;top:173.500px;width:103px;height:11.500px;border:1px solid #4f8fc4;background:linear-gradient(to right,#cfe7fb,#5cb6f2 50%,#129cee)"></div>
<div class="t" style="left:158px;top:174px;font-size:8.300px">100 %</div>
<div class="t" style="left:5px;top:193.500px;font-size:8.300px">Pha trộn</div>
<div class="a" style="left:53px;top:190px;width:128px;height:16.500px;background:#fff;border:1px solid #a4a8ab;border-radius:1px"></div>
<div class="t" style="left:56px;top:193.500px;font-size:8.300px">Bình thường</div>
<svg style="left:171px;top:196.500px" width="6" height="4" viewBox="0 0 6 4"><path d="M0 0h6l-3 3.500z" fill="#b8bbbe"/></svg>
<div class="cb" style="left:7px;top:214.500px;width:9.500px;height:9.500px"></div>
<div class="t" style="left:21px;top:213.500px;font-size:7.900px">Bảo vệ alpha</div>
<div class="cb" style="left:76.5px;top:214.500px;width:9.500px;height:9.500px"></div>
<div class="t" style="left:91px;top:213.500px;font-size:7.900px">Xén bớt</div>
<div class="cb" style="left:133px;top:214.500px;width:9.500px;height:9.500px"></div>
<div class="t" style="left:147px;top:213.500px;font-size:7.900px">Khóa</div>
<div class="a" style="left:2px;top:229.600px;width:168px;height:217.400px;background:#fff;overflow:hidden;border-left:1px solid #888">
<div class="a" style="left:0;top:0.0px;width:168px;height:31.100px;border-bottom:1px solid #2a2a2a;border-top:1px solid #2a2a2a">
<div class="a" style="left:13px;top:0;width:154px;height:29.100px;background:#6ec6f4;border-left:1px solid #2a2a2a;border-right:1px solid #2a2a2a"></div>
<div class="a" style="left:3.500px;top:11.500px;width:6.500px;height:6.500px;border-radius:50%;background:#bdbdbd;border:1px solid #a6a6a6"></div>
<div class="a chk" style="left:23.700px;top:2.800px;width:27.500px;height:22px;border:1px solid #a0a0a0;background-size:4px 4px;background-position:0 0,2px 2px"></div>
<div class="t" style="left:63.300px;top:8px;font-size:10.300px;font-weight:bold;color:#0a1a2a;letter-spacing:-.05px">VenDayy #Hd247</div>
<svg style="left:149.500px;top:7.700px" width="14" height="14" viewBox="-5 -5 10 10"><g fill="#fff"><circle r="3.200"/><rect x="-1.100" y="-4.800" width="2.200" height="3" transform="rotate(0)"/><rect x="-1.100" y="-4.800" width="2.200" height="3" transform="rotate(45)"/><rect x="-1.100" y="-4.800" width="2.200" height="3" transform="rotate(90)"/><rect x="-1.100" y="-4.800" width="2.200" height="3" transform="rotate(135)"/><rect x="-1.100" y="-4.800" width="2.200" height="3" transform="rotate(180)"/><rect x="-1.100" y="-4.800" width="2.200" height="3" transform="rotate(225)"/><rect x="-1.100" y="-4.800" width="2.200" height="3" transform="rotate(270)"/><rect x="-1.100" y="-4.800" width="2.200" height="3" transform="rotate(315)"/></g><circle r="1.300" fill="#6ec6f4"/></svg>
</div>
<div class="a" style="left:0;top:29.9px;width:168px;height:31.100px;border-bottom:1px solid #2a2a2a;border-top:1px solid #2a2a2a">
<div class="a" style="left:13px;top:0;width:154px;height:29.100px;background:#fff;border-left:1px solid #2a2a2a;border-right:1px solid #2a2a2a"></div>
<div class="a" style="left:3.500px;top:11.500px;width:6.500px;height:6.500px;border-radius:50%;background:#bdbdbd;border:1px solid #a6a6a6"></div>
<div class="a chk" style="left:23.700px;top:2.800px;width:27.500px;height:22px;border:1px solid #a0a0a0;background-size:4px 4px;background-position:0 0,2px 2px"></div>
<div class="t" style="left:63px;top:7.700px;font-size:8.800px;color:#222">Lớp3</div>
</div>
<div class="a" style="left:0;top:59.9px;width:168px;height:31.100px;border-bottom:1px solid #2a2a2a;border-top:1px solid #2a2a2a">
<div class="a" style="left:13px;top:0;width:154px;height:29.100px;background:#fff;border-left:1px solid #2a2a2a;border-right:1px solid #2a2a2a"></div>
<div class="a chk" style="left:23.700px;top:2.800px;width:27.500px;height:22px;border:1px solid #a0a0a0;background-size:4px 4px;background-position:0 0,2px 2px"></div>
<div class="t" style="left:63px;top:7.700px;font-size:8.800px;color:#222">Lớp2</div>
</div>
<div class="a" style="left:0;top:89.8px;width:168px;height:31.100px;border-bottom:1px solid #2a2a2a;border-top:1px solid #2a2a2a">
<div class="a" style="left:13px;top:0;width:154px;height:29.100px;background:#fff;border-left:1px solid #2a2a2a;border-right:1px solid #2a2a2a"></div>
<div class="a" style="left:3.500px;top:11.500px;width:6.500px;height:6.500px;border-radius:50%;background:#bdbdbd;border:1px solid #a6a6a6"></div>
<div class="a chk" style="left:23.700px;top:2.800px;width:27.500px;height:22px;border:1px solid #a0a0a0;background-size:4px 4px;background-position:0 0,2px 2px"></div>
<div class="t" style="left:63px;top:7.700px;font-size:8.800px;color:#222">Lớp9</div>
</div>
<div class="a" style="left:0;top:119.8px;width:168px;height:31.100px;border-bottom:1px solid #2a2a2a;border-top:1px solid #2a2a2a">
<div class="a" style="left:13px;top:0;width:154px;height:29.100px;background:#fff;border-left:1px solid #2a2a2a;border-right:1px solid #2a2a2a"></div>
<div class="a" style="left:3.500px;top:11.500px;width:6.500px;height:6.500px;border-radius:50%;background:#bdbdbd;border:1px solid #a6a6a6"></div>
<div class="a chk" style="left:23.700px;top:2.800px;width:27.500px;height:22px;border:1px solid #a0a0a0;background-size:4px 4px;background-position:0 0,2px 2px"></div>
<div class="t" style="left:63px;top:7.700px;font-size:8.800px;color:#222">Lớp9</div>
</div>
<div class="a" style="left:0;top:149.8px;width:168px;height:31.100px;border-bottom:1px solid #2a2a2a;border-top:1px solid #2a2a2a">
<div class="a" style="left:13px;top:0;width:154px;height:29.100px;background:#fff;border-left:1px solid #2a2a2a;border-right:1px solid #2a2a2a"></div>
<div class="a" style="left:3.500px;top:11.500px;width:6.500px;height:6.500px;border-radius:50%;background:#bdbdbd;border:1px solid #a6a6a6"></div>
<div class="a chk" style="left:23.700px;top:2.800px;width:27.500px;height:22px;border:1px solid #a0a0a0;background-size:4px 4px;background-position:0 0,2px 2px"></div>
<div class="t" style="left:63px;top:7.700px;font-size:8.800px;color:#222">Lớp8</div>
</div>
<div class="a" style="left:0;top:179.7px;width:168px;height:31.100px;border-bottom:1px solid #2a2a2a;border-top:1px solid #2a2a2a">
<div class="a" style="left:13px;top:0;width:154px;height:29.100px;background:#fff;border-left:1px solid #2a2a2a;border-right:1px solid #2a2a2a"></div>
<div class="a" style="left:3.500px;top:11.500px;width:6.500px;height:6.500px;border-radius:50%;background:#bdbdbd;border:1px solid #a6a6a6"></div>
<div class="a chk" style="left:23.700px;top:2.800px;width:27.500px;height:22px;border:1px solid #a0a0a0;background-size:4px 4px;background-position:0 0,2px 2px"></div>
<div class="t" style="left:63px;top:7.700px;font-size:8.800px;color:#222">Lớp7</div>
</div>
<div class="a" style="left:0;top:209.7px;width:168px;height:31.100px;border-bottom:1px solid #2a2a2a;border-top:1px solid #2a2a2a">
<div class="a" style="left:13px;top:0;width:154px;height:29.100px;background:#fff;border-left:1px solid #2a2a2a;border-right:1px solid #2a2a2a"></div>
<div class="a" style="left:3.500px;top:11.500px;width:6.500px;height:6.500px;border-radius:50%;background:#bdbdbd;border:1px solid #a6a6a6"></div>
<div class="a chk" style="left:23.700px;top:2.800px;width:27.500px;height:22px;border:1px solid #a0a0a0;background-size:4px 4px;background-position:0 0,2px 2px"></div>
<div class="t" style="left:63px;top:7.700px;font-size:8.800px;color:#222">Lớp6</div>
</div>
</div>
<div class="sb" style="left:171.500px;top:237px;width:12.500px;height:200px;background:#c5c9cc;border:1px solid #b0b4b8"></div>
<div class="a" style="left:0;top:447.500px;width:186px;height:23.500px;background:#c7cacc"></div>
<div class="btn" id="lb0" style="left:4.3px;top:450px;width:19px;height:18.500px"></div>
<div class="btn" id="lb1" style="left:27.7px;top:450px;width:19px;height:18.500px"></div>
<div class="btn" id="lb2" style="left:51.0px;top:450px;width:19px;height:18.500px"></div>
<div class="btn" id="lb3" style="left:74.0px;top:450px;width:23px;height:18.500px;border-color:#d3d6d8;box-shadow:none;background:#dfe2e4"></div>
<div class="btn" id="lb4" style="left:101.0px;top:450px;width:19px;height:18.500px"></div>
<div class="btn" id="lb5" style="left:129.6px;top:450px;width:19px;height:18.500px"></div>
<div class="btn" id="lb6" style="left:152.8px;top:450px;width:19px;height:18.500px"></div>
<div class="sep" style="left:124.500px;top:454px;height:10px;background:#9a9ea2"></div>
<div class="sb" style="left:177px;top:449px;width:6px;height:20px;background:linear-gradient(90deg,#f8f8f8,#e2e4e6);border-radius:3px"></div>
</div>
<svg style="left:11px;top:38px" width="15" height="13" viewBox="0 0 15 13"><path d="M3.6 10.5a3.1 3.1 0 0 1-.3-6.1a4.2 4.2 0 0 1 8-.6a3.4 3.4 0 0 1 .4 6.7z" fill="#5b9bdf"/><path d="M4.6 6.3l2 2l3.6-4" fill="none" stroke="#fff" stroke-width="1.5"/></svg>
<svg style="left:36px;top:37px" width="12" height="14" viewBox="0 0 12 14"><path d="M3.5 6.5h-2v6h9v-6h-2" fill="none" stroke="#606467" stroke-width="1.5"/><path d="M6 9V2M3.3 4.2L6 1.3l2.7 2.9" fill="none" stroke="#606467" stroke-width="1.5"/></svg>
<svg style="left:58px;top:39px" width="14" height="12" viewBox="0 0 14 12"><ellipse cx="7" cy="4.8" rx="6.4" ry="4.4" fill="#7c8083"/><path d="M4.5 8l.5 3.2l3-2.6z" fill="#7c8083"/></svg>
<svg style="left:81px;top:38px" width="14" height="13" viewBox="0 0 14 13"><rect x=".5" y="1" width="13" height="8.5" rx="1.3" fill="#55585b"/><path d="M5.5 9.3l1.5 2l1.5-2z" fill="#55585b"/><path d="M3 4h8M3 6.5h5" stroke="#e8e8e8" stroke-width="1.1"/></svg>
<svg style="left:106px;top:38px" width="10" height="13" viewBox="0 0 10 13"><path d="M.7 .7h5.8l2.8 2.8v8.8h-8.6z" fill="#f4f4f4" stroke="#7a7e82" stroke-width="1"/><path d="M2.5 5h5M2.5 7h5M2.5 9h5" stroke="#8c9094" stroke-width=".9"/><path d="M6.5 .7v2.8h2.8" fill="none" stroke="#7a7e82" stroke-width=".8"/></svg>
<svg style="left:128px;top:37px" width="13" height="15" viewBox="0 0 13 15"><rect x="1" y="1" width="11.5" height="8.6" fill="none" stroke="#6a6e72" stroke-width="1"/><path d="M1 4h11.5M1 6.8h11.5M4.2 1v8.6" stroke="#6a6e72" stroke-width=".9"/><circle cx="3.6" cy="11" r="2.7" fill="#f2f2f2" stroke="#6a6e72" stroke-width=".9"/><path d="M3.6 9.6v1.5h1.2" fill="none" stroke="#6a6e72" stroke-width=".7"/></svg>
<svg style="left:151px;top:37px" width="14" height="14" viewBox="0 0 14 14"><g fill="#4f5255"><rect x=".5" y="4" width="3.6" height="2.6"/><rect x="4.9" y="4" width="3.6" height="2.6"/><rect x=".5" y="7.4" width="3.6" height="2.6"/><rect x="4.9" y="7.4" width="3.6" height="2.6"/><rect x="9.3" y="7.4" width="3.6" height="2.6"/><rect x=".5" y="10.8" width="3.6" height="2.6"/><rect x="4.9" y="10.8" width="3.6" height="2.6"/><rect x="9.3" y="10.8" width="3.6" height="2.6"/></g><path d="M8.2 6.6l.6-2l4-4l1.3 1.3l-4 4z" fill="#6a6e72"/></svg>
<svg style="left:183px;top:38px" width="16" height="12" viewBox="0 0 16 12"><path d="M.8 5.2L7 .8v2.8c4.5.2 7.6 2.6 8.3 7.4c-2-2.8-4.400-3.800-8.300-3.700v2.500z" fill="#55585b"/></svg>
<svg style="left:211px;top:38px" width="16" height="12" viewBox="0 0 16 12"><path d="M15.2 5.2L9 .8v2.8c-4.5.2-7.6 2.6-8.3 7.4c2-2.8 4.400-3.800 8.300-3.700v2.500z" fill="#9a9da0"/></svg>
<svg style="left:392.5px;top:37.6px" width="14" height="14" viewBox="0 0 14 14"><circle cx="7" cy="7" r="6.1" fill="none" stroke="#6a6e72" stroke-width="1"/><path d="M2.7 2.7l8.600 8.600" stroke="#6a6e72" stroke-width="1"/></svg>
<svg style="left:447px;top:37px" width="14" height="14" viewBox="0 0 14 14"><rect x=".300" y=".300" width="3.200" height="3.200" fill="#3c3f42"/><rect x="9.500" y=".700" width="2.800" height="2.800" fill="#f4f4f4" stroke="#55585b" stroke-width=".8"/><rect x=".700" y="10" width="2.800" height="2.800" fill="#f4f4f4" stroke="#55585b" stroke-width=".8"/><path d="M4.500 2.100h4.500M2.100 4.500v5" stroke="#7a7d80" stroke-width="1" stroke-dasharray="1.200 1"/></svg>
<svg style="left:3px;top:65px" width="24" height="24" viewBox="0 0 24 24"><path d="M19.5 4.200L11 12.800" stroke="#606467" stroke-width="2.200" stroke-linecap="round"/><path d="M10.8 11.500c1.300.6 2 1.500 2 2.700c-1.500 3.300-5 4.600-8.800 4.300c2-.8 2.500-2 2.900-3.800c.5-2 2.200-3.300 3.900-3.200z" fill="#606467"/></svg>
<svg style="left:3px;top:93px" width="24" height="24" viewBox="0 0 24 24"><path d="M15 4.100L19.500 8.600L8.600 19.500L4.100 15z" fill="#f6f6f6" stroke="#606467" stroke-width="1.300" stroke-linejoin="round"/><path d="M8.840 10.240L13.360 14.760L8.600 19.500L4.100 15z" fill="#606467" stroke="#606467" stroke-width="1" stroke-linejoin="round"/></svg>
<svg style="left:3px;top:121px" width="24" height="24" viewBox="0 0 24 24"><rect x="7" y="7" width="10.500" height="10.500" fill="#f0f0f0" stroke="#77797c" stroke-width="1.200"/></svg>
<svg style="left:3px;top:149px" width="24" height="24" viewBox="0 0 24 24"><path d="M4.500 12l5.500 5.500" stroke="#606467" stroke-width="2" stroke-dasharray="1.800 1.700"/><path d="M10.300 17.800l1-3.200l7.300-7.300l2.200 2.200l-7.300 7.300z" fill="#606467"/></svg>
<svg style="left:3px;top:181px" width="24" height="24" viewBox="0 0 24 24"><g fill="none" stroke="#3f86c2" stroke-width="1.400"><path d="M12 5v14M5 12h14"/><path d="M9.800 7.200L12 5l2.200 2.200M9.800 16.800L12 19l2.200-2.200M7.200 9.800L5 12l2.200 2.200M16.800 9.800L19 12l-2.200 2.200"/></g></svg>
<svg style="left:3px;top:215px" width="24" height="24" viewBox="0 0 24 24"><rect x="6.500" y="6.500" width="11.500" height="11.500" fill="#6a6c6f" stroke="#55585b" stroke-width="1"/></svg>
<svg style="left:3px;top:243px" width="24" height="24" viewBox="0 0 24 24"><path d="M6 11.500l8.500-1.500l1.500 6.500c-2 2.500-6 3.500-9 2z" fill="#606467"/><path d="M5.500 10.500c0-2.500 2-4.500 4.500-5c2.500-.3 4.500 1.200 5 4" fill="none" stroke="#606467" stroke-width="1.200"/><ellipse cx="10.200" cy="10.600" rx="4.800" ry="1.700" fill="#f2f2f2" stroke="#606467" stroke-width="1" transform="rotate(-10 10.2 10.6)"/><path d="M17.500 13.500c1.300 2 1.600 3 1.600 3.800a1.500 1.500 0 0 1-3 0c0-.8.400-1.800 1.400-3.800z" fill="#606467"/></svg>
<svg style="left:3px;top:271px" width="24" height="24" viewBox="0 0 24 24"><defs><linearGradient id="gg" x1="0" y1="0" x2="0" y2="1"><stop offset="0" stop-color="#5a5c5f"/><stop offset="1" stop-color="#cfd1d3"/></linearGradient></defs><rect x="5" y="6.500" width="14.500" height="11.500" fill="url(#gg)" stroke="#55585b" stroke-width="1.200"/></svg>
<svg style="left:3px;top:303px" width="24" height="24" viewBox="0 0 24 24"><rect x="7" y="6.500" width="11" height="11" fill="none" stroke="#606467" stroke-width="1.300" stroke-dasharray="2 1.500"/></svg>
<svg style="left:3px;top:331px" width="24" height="24" viewBox="0 0 24 24"><path d="M4.500 16.500c-1.200-2.800 1.500-5 4.500-6.500c3-1.800 6-5 9.500-3.500c2.500 1.500 1.500 5.500-1 8c-2.500 2.500-6 3.800-9 4.200c-2 .300-3.500-.700-4-2.200z" fill="none" stroke="#7a7d80" stroke-width="1.300" stroke-dasharray="1.800 1.600"/></svg>
<svg style="left:3px;top:359px" width="24" height="24" viewBox="0 0 24 24"><path d="M5.500 18.500l9-9" stroke="#606467" stroke-width="2.400" stroke-linecap="round"/><path d="M16.500 4v3M16.500 11v2.500M13 7.500h-2.500M20.500 7.500h-2M19.500 4.500l-1.500 1.500M19.500 10.800l-1.500-1.500M13.200 4.500l1.500 1.500" stroke="#606467" stroke-width="1.100"/></svg>
<svg style="left:3px;top:387px" width="24" height="24" viewBox="0 0 24 24"><path d="M14 6.500H6.500v11h11V12" fill="none" stroke="#606467" stroke-width="1.300" stroke-dasharray="1.800 1.600"/><path d="M9.800 14.800l.9-3l6.600-6.600l2.100 2.100l-6.600 6.600z" fill="#606467"/></svg>
<svg style="left:3px;top:415px" width="24" height="24" viewBox="0 0 24 24"><path d="M9 6.500H6v11h11V15" fill="none" stroke="#606467" stroke-width="1.300" stroke-dasharray="1.800 1.600"/><path d="M9.500 10.500L15.300 4.800h4.300v4.300L13.900 14.800z" fill="#f4f4f4" stroke="#606467" stroke-width="1.100" stroke-linejoin="round"/><path d="M9.500 10.500l2.600-2.600l4.400 4.400l-2.600 2.500z" fill="#606467"/></svg>
<div class="t" style="left:3px;top:446px;width:24px;text-align:center;font-family:'Liberation Serif',serif;font-weight:bold;font-size:25px;line-height:28px;color:#5c5f62">T</div>
<svg style="left:3px;top:475px" width="24" height="24" viewBox="0 0 24 24"><path d="M6 10l2.500-4l5-.5l3 3l-.5 3.500M12 15.500l-4.500-.5z" fill="none" stroke="#606467" stroke-width="1.100"/><path d="M6 10l1.500 5l4 .5" fill="none" stroke="#606467" stroke-width="1.100"/><path d="M12.500 11.500l7.500 3.800l-3.300.9l-1.200 3.300z" fill="#44474a"/></svg>
<div class="a" style="left:3px;top:524px;width:23px;height:4px;border-radius:2px;background:#f4f4f4;border:1px solid #b4b8bb"></div>
<svg style="left:36.5px;top:421.5px" width="14" height="14" viewBox="0 0 14 14"><path d="M3.300 7.800a2.600 2.600 0 0 1-.200-5.200a3.700 3.700 0 0 1 7-.500a2.900 2.900 0 0 1 .400 5.700z" fill="#55585b"/><path d="M7 4.500v8M4.600 10.300L7 12.900l2.400-2.600M5.200 6.300L7 4.300l1.800 2" fill="none" stroke="#55585b" stroke-width="1.500"/><path d="M7 5.200v2.800" stroke="#e8e8e8" stroke-width=".8"/></svg>
<svg style="left:60.7px;top:422px" width="11" height="13" viewBox="0 0 11 13"><path d="M.700 .700h5.800l3.300 3.300v8.300h-9.100z" fill="#f6f6f6" stroke="#6f7376" stroke-width="1"/><path d="M6.500 .700v3.300h3.300z" fill="#6f7376"/></svg>
<svg style="left:83.5px;top:422px" width="11" height="13" viewBox="0 0 11 13"><path d="M.700 .700h5.800l3.300 3.300v8.300h-9.100z" fill="#f6f6f6" stroke="#6f7376" stroke-width="1"/><path d="M6.500 .700v3.300h3.300z" fill="#6f7376"/><rect x="2.500" y="5.500" width="5.500" height="4.800" fill="#55585b"/><path d="M3.300 9.500l1.500-2l1.300 1.200l1.200-1.500" stroke="#ddd" stroke-width=".6" fill="none"/></svg>
<svg style="left:97px;top:427.5px" width="5" height="3" viewBox="0 0 5 3"><path d="M0 0h5l-2.500 3z" fill="#55585b"/></svg>
<svg style="left:111px;top:422px" width="11" height="13" viewBox="0 0 11 13"><path d="M.700 .700h5.800l3.300 3.300v8.300h-9.100z" fill="#f6f6f6" stroke="#6f7376" stroke-width="1"/><path d="M6.500 .700v3.300h3.300z" fill="#6f7376"/><text x="5" y="10.800" font-family="Liberation Sans,sans-serif" font-size="7.500" font-weight="bold" text-anchor="middle" fill="#6a6e72">S</text></svg>
<svg style="left:133.5px;top:424px" width="13" height="10" viewBox="0 0 13 10"><path d="M.500 1.200c0-.500.300-.700.700-.700h3.600l1.200 1.500h6c.400 0 .600.300.600.600v6.400c0 .400-.300.600-.600.600h-10.900c-.400 0-.600-.300-.600-.600z" fill="#55585b"/><path d="M.500 3.400h12" stroke="#6b6e71" stroke-width=".6"/></svg>
<svg style="left:157px;top:422.8px" width="12" height="12" viewBox="0 0 12 12"><rect x="3.500" y=".600" width="7.800" height="7.800" fill="#f4f4f4" stroke="#6a6e72" stroke-width="1"/><rect x=".600" y="3.500" width="7.800" height="7.800" fill="#f4f4f4" stroke="#6a6e72" stroke-width="1"/></svg>
<svg style="left:37.7px;top:510.5px" width="11" height="13" viewBox="0 0 11 13"><path d="M.700 .700h5.800l3.300 3.300v8.300h-9.100z" fill="#f6f6f6" stroke="#6f7376" stroke-width="1"/><path d="M6.500 .700v3.300h3.300z" fill="#6f7376"/></svg>
<svg style="left:60.5px;top:510px" width="12" height="14" viewBox="0 0 12 14"><path d="M1.500 4h9l-.700 9h-7.600z" fill="#f2f2f2" stroke="#6a6e72" stroke-width="1"/><path d="M.300 3.500h11.400M4 3.200V1.500h4v1.700" fill="none" stroke="#6a6e72" stroke-width="1"/><path d="M4.200 5.500v6M6 5.500v6M7.800 5.500v6" stroke="#6a6e72" stroke-width=".8"/></svg>
<svg style="left:849px;top:183.5px" width="14" height="14" viewBox="0 0 14 14"><path d="M7 1.200a5.800 5.800 0 1 0 0 11.600c1.200 0 1.600-.700 1.400-1.500c-.300-1.200.300-1.900 1.500-1.900h1.300c1 0 1.600-.700 1.600-1.800c0-3.600-2.600-6.400-5.800-6.400z" fill="#55585b"/><g fill="#eee"><circle cx="4" cy="5" r="1.100"/><circle cx="7" cy="3.500" r="1.100"/><circle cx="10" cy="5" r="1.100"/><circle cx="3.800" cy="8.500" r="1.100"/></g></svg>
<svg style="left:871.5px;top:182.5px" width="11" height="11" viewBox="0 0 14 14"><path d="M7 1.200a5.800 5.800 0 1 0 0 11.600c1.200 0 1.600-.700 1.400-1.500c-.300-1.200.300-1.900 1.500-1.900h1.300c1 0 1.600-.700 1.600-1.800c0-3.600-2.600-6.400-5.800-6.400z" fill="#55585b"/><g fill="#eee"><circle cx="4" cy="5" r="1.100"/><circle cx="7" cy="3.500" r="1.100"/><circle cx="10" cy="5" r="1.100"/><circle cx="3.800" cy="8.500" r="1.100"/></g></svg>
<svg style="left:878.5px;top:192px" width="7" height="3" viewBox="0 0 7 3"><rect width="7" height="2.500" fill="#55585b"/></svg>
<svg style="left:846.3px;top:510.5px" width="11" height="13" viewBox="0 0 11 13"><path d="M.700 .700h5.800l3.300 3.300v8.300h-9.100z" fill="#f6f6f6" stroke="#6f7376" stroke-width="1"/><path d="M6.500 .700v3.300h3.300z" fill="#6f7376"/></svg>
<svg style="left:869.7px;top:510.5px" width="11" height="13" viewBox="0 0 11 13"><path d="M.700 .700h5.800l3.300 3.300v8.300h-9.100z" fill="#f6f6f6" stroke="#6f7376" stroke-width="1"/><path d="M6.500 .700v3.300h3.300z" fill="#6f7376"/><text x="5" y="10.800" font-family="Liberation Sans,sans-serif" font-size="7" text-anchor="middle" fill="#55585b">8</text></svg>
<svg style="left:893px;top:510.5px" width="11" height="13" viewBox="0 0 11 13"><path d="M.700 .700h5.800l3.300 3.300v8.300h-9.100z" fill="#f6f6f6" stroke="#6f7376" stroke-width="1"/><path d="M6.500 .700v3.300h3.300z" fill="#6f7376"/><text x="5" y="10.800" font-family="Liberation Sans,sans-serif" font-size="7" text-anchor="middle" fill="#55585b">1</text></svg>
<svg style="left:914.5px;top:509.5px" width="11" height="13" viewBox="0 0 11 13"><path d="M.700 .700h5.800l3.300 3.300v8.300h-9.100z" fill="#f6f6f6" stroke="#9a9da0" stroke-width="1"/><path d="M6.500 .700v3.300h3.300z" fill="#9a9da0"/><path d="M8.500 7.500v6M5.500 10.500h6" stroke="#55585b" stroke-width="1.600"/></svg>
<svg style="left:928.5px;top:515.5px" width="5" height="3" viewBox="0 0 5 3"><path d="M0 0h5l-2.500 3z" fill="#55585b"/></svg>
<svg style="left:942px;top:512.5px" width="13" height="10" viewBox="0 0 13 10"><path d="M.500 1.200c0-.500.300-.700.700-.700h3.600l1.200 1.500h6c.400 0 .600.300.600.600v6.400c0 .400-.300.600-.600.600h-10.900c-.400 0-.600-.300-.600-.600z" fill="#55585b"/><path d="M.500 3.400h12" stroke="#6b6e71" stroke-width=".6"/></svg>
<svg style="left:971px;top:511.3px" width="12" height="12" viewBox="0 0 12 12"><rect x="3.500" y=".600" width="7.800" height="7.800" fill="#f4f4f4" stroke="#6a6e72" stroke-width="1"/><rect x=".600" y="3.500" width="7.800" height="7.800" fill="#f4f4f4" stroke="#6a6e72" stroke-width="1"/></svg>
<svg style="left:993.5px;top:511px" width="14" height="12" viewBox="0 0 14 12"><rect x=".600" y=".600" width="3.800" height="3.800" fill="#f4f4f4" stroke="#55585b" stroke-width="1"/><rect x=".600" y="7" width="3.800" height="3.800" fill="#55585b" stroke="#55585b" stroke-width="1"/><rect x="9" y="3.500" width="4" height="4" fill="#55585b"/><path d="M4.500 2.500h2.500v3h2M4.500 9h2.500v-3.500" fill="none" stroke="#55585b" stroke-width=".9"/></svg>
</div></body></html>
